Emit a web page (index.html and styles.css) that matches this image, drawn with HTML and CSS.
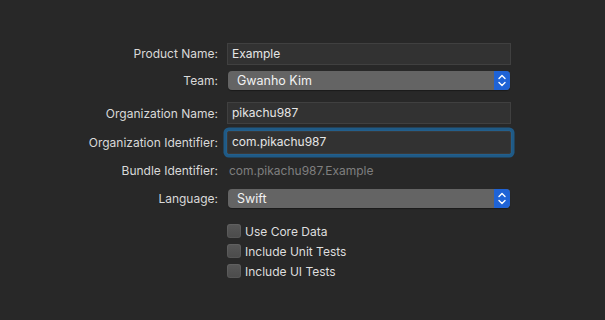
FILE: index.html
```html
<!DOCTYPE html>
<html lang="en">

<head>
    <meta charset="UTF-8">
    <meta name="viewport" content="width=device-width, initial-scale=1.0">
    <title>New Project Options</title>
    <link rel="stylesheet" href="styles.css">
</head>

<body>
    <!-- project options sheet -->
    <form class="options">
        <label class="label">Product Name:</label>
        <div class="field">Example</div>

        <label class="label">Team:</label>
        <div class="popup">
            <span class="popup-value">Gwanho Kim</span>
            <span class="stepper">
                <svg width="16" height="19" viewBox="0 0 16 19">
                    <path d="M5 7.5 L8 4.5 L11 7.5 M5 11.5 L8 14.5 L11 11.5" fill="none" stroke="#fff" stroke-width="1.4" stroke-linecap="round" stroke-linejoin="round"/>
                </svg>
            </span>
        </div>

        <label class="label">Organization Name:</label>
        <div class="field">pikachu987</div>

        <label class="label">Organization Identifier:</label>
        <div class="field focused">com.pikachu987</div>

        <label class="label">Bundle Identifier:</label>
        <div class="static">com.pikachu987.Example</div>

        <label class="label">Language:</label>
        <div class="popup">
            <span class="popup-value">Swift</span>
            <span class="stepper">
                <svg width="16" height="19" viewBox="0 0 16 19">
                    <path d="M5 7.5 L8 4.5 L11 7.5 M5 11.5 L8 14.5 L11 11.5" fill="none" stroke="#fff" stroke-width="1.4" stroke-linecap="round" stroke-linejoin="round"/>
                </svg>
            </span>
        </div>

        <div class="checks">
            <div class="check"><span class="box"></span>Use Core Data</div>
            <div class="check"><span class="box"></span>Include Unit Tests</div>
            <div class="check"><span class="box"></span>Include UI Tests</div>
        </div>
    </form>
</body>

</html>
```

FILE: styles.css
```css
html,
body {
    margin: 0;
    padding: 0;
    background: #282828;
    font-family: "Inter", "Liberation Sans", sans-serif;
    font-size: 12px;
    color: #dedede;
}

.options {
    display: grid;
    grid-template-columns: 140px 284px;
    grid-template-rows: 23px 31px 34px 25px 30px 27px auto;
    column-gap: 9px;
    align-items: center;
    margin: 0;
    padding: 42px 0 0 78px;
}

.label {
    text-align: right;
    color: #d9d9d9;
    white-space: nowrap;
}

.field {
    box-sizing: border-box;
    height: 22px;
    line-height: 20px;
    padding: 0 4px;
    background: #323232;
    border: 1px solid #404040;
    color: #e6e6e6;
}

.field.focused {
    height: 23px;
    border-color: #3a3a3a;
    border-radius: 2px;
    box-shadow: 0 0 0 1px #235f8c, 0 0 0 3.5px #1f5a86;
}

.static {
    padding-left: 2px;
    color: #7f7f7f;
}

.popup {
    display: flex;
    align-items: center;
    height: 19px;
    margin: 0 1px;
    background: #646464;
    border-radius: 4px;
    box-shadow: 0 1px 1px rgba(0, 0, 0, .35);
    color: #f2f2f2;
    font-size: 12.5px;
}

.popup-value {
    flex: 1;
    padding-left: 9px;
}

.stepper {
    display: flex;
    width: 16px;
    height: 19px;
    background: #1f63d6;
    border-radius: 0 4px 4px 0;
}

.checks {
    grid-column: 2;
    display: flex;
    flex-direction: column;
    padding-top: 9px;
}

.check {
    display: flex;
    align-items: center;
    height: 20px;
    color: #dedede;
}

.box {
    box-sizing: border-box;
    width: 14px;
    height: 14px;
    margin: 0 4px 0 0;
    background: linear-gradient(#575757, #4b4b4b);
    border-radius: 3px;
    box-shadow: inset 0 0 0 1px rgba(255, 255, 255, .06);
}
```
